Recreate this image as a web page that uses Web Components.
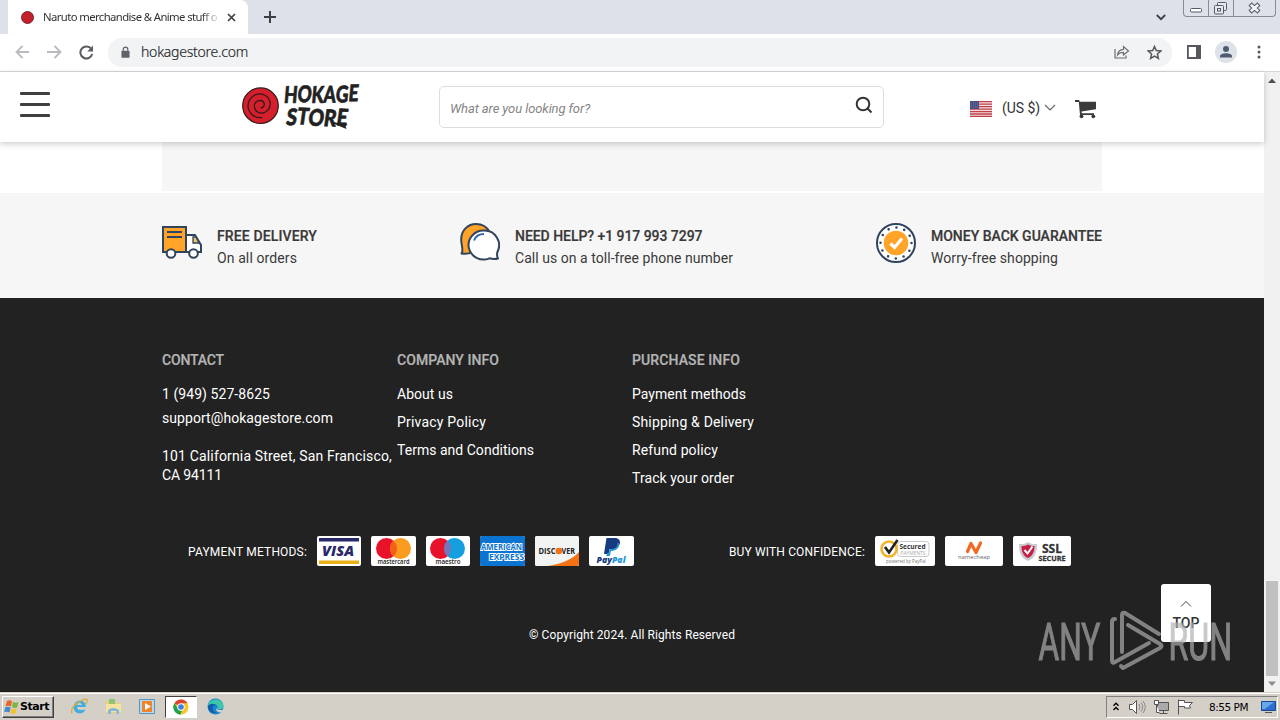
<!DOCTYPE html>
<html lang="en">
<head>
<meta charset="utf-8">
<title>Hokage Store</title>
<style>
html,body{margin:0;height:100%;overflow:hidden}
body{font-family:Roboto,"Liberation Sans",sans-serif;color:#333}
</style>
</head>
<body>
<desktop-screen></desktop-screen>
<script>
const define=(name,html)=>customElements.define(name,class extends HTMLElement{
  constructor(){super();const t=document.createElement('template');t.innerHTML=html;
    this.attachShadow({mode:'open'}).append(t.content.cloneNode(true));}
});

// Label that spreads its letters evenly over the width given in "w".
customElements.define('fit-label',class extends HTMLElement{
  connectedCallback(){
    if(this.shadowRoot)return;
    this.attachShadow({mode:'open'}).innerHTML='<style>:host{display:block;white-space:nowrap}span{display:inline-block}</style><span><slot></slot></span>';
    const s=this.shadowRoot.querySelector('span'),w=+this.getAttribute('w');
    const n=this.textContent.length;
    s.style.letterSpacing=(w-s.getBoundingClientRect().width)/n+'px';
    this.style.width=w+'px';
  }
});

define('browser-tabs',`<style>
:host{display:flex;height:34px;background:#dee1e9;align-items:flex-start}
.tab{margin-left:8px;width:240px;height:34px;background:#fff;border-radius:0 8px 0 0;display:flex;align-items:center;box-sizing:border-box;padding:0 11px 0 13px}
.dot{width:13px;height:13px;border-radius:50%;background:#c3202b;border:.5px solid #7c2630;box-sizing:border-box;margin-right:9px}
.title{width:175px;overflow:hidden;font:11.300px/18px "Noto Sans",sans-serif;color:#333;-webkit-mask:linear-gradient(90deg,#000 158px,transparent 178px)}
svg{display:block}.x{margin-left:9px}.plus{margin:11px 0 0 16px}
.chev{margin:14px 17px 0 auto}
.win{display:flex;border:1px solid #868b95;border-top:0;border-radius:0 0 4px 4px;height:17px;margin-right:4px;box-sizing:border-box}
.win svg+svg{border-left:1px solid #868b95}
</style>
<div class="tab"><i class="dot"></i><div class="title"><fit-label w="174">Naruto merchandise &amp; Anime stuff o</fit-label></div>
<svg class="x" width="9" height="9" stroke="#3c4043" stroke-width="1.7"><path d="M1 1l7 7M8 1l-7 7"/></svg></div>
<svg class="plus" width="12" height="12" stroke="#3c4043" stroke-width="2"><path d="M6 0v12M0 6h12"/></svg>
<svg class="chev" width="10" height="7" fill="none" stroke="#3c4043" stroke-width="1.8"><path d="M.8 1l4.2 4.2L9.200 1"/></svg>
<div class="win">
<svg width="24" height="16" fill="#fff" stroke="#555b66"><rect x="6.500" y="8.500" width="11" height="3.500" rx="1"/></svg>
<svg width="24" height="16" fill="#e6e8ed" stroke="#555b66"><rect x="8.500" y="2.500" width="9" height="8" rx="1"/><rect x="5.500" y="5.500" width="9" height="8.500" rx="1"/><rect x="8.500" y="8.500" width="3" height="2.500"/></svg>
<svg width="41" height="16"><path d="M16 4l9 8M25 4l-9 8" stroke="#555b66" stroke-width="4.600"/><path d="M16.800 4.700l7.400 6.600M24.200 4.700l-7.400 6.600" stroke="#f4f5f7" stroke-width="2.600"/></svg>
</div>`);

define('browser-toolbar',`<style>
:host{display:flex;height:38px;box-sizing:border-box;border-bottom:1px solid #d5d7da;background:#fff;align-items:center;padding:0 15px 1px}
svg{display:block;flex:none}
.nav{display:flex;gap:17px}
.omni{display:flex;align-items:center;background:#f1f3f4;border-radius:14px;height:29px;width:1064px;box-sizing:border-box;margin-left:14px;padding:0 10px 0 13px}
fit-label{font:300 14px "Noto Sans",sans-serif;color:#202124;margin-left:11px;line-height:30px;-webkit-text-stroke:.15px #202124}
.share{margin-left:auto;margin-right:17px}
.right{display:flex;align-items:center;margin-left:15px}
</style>
<div class="nav">
<svg width="15" height="14" fill="none" stroke="#b9bbbe" stroke-width="1.800"><path d="M14 7H1.500M7.500 1L1.500 7l6 6"/></svg>
<svg width="15" height="14" fill="none" stroke="#b9bbbe" stroke-width="1.800"><path d="M0 7h13M7.500 1l6 6-6 6"/></svg>
<svg width="15" height="15" fill="none" stroke="#5a5d61" stroke-width="2"><path d="M12.300 4A6 6 0 1 0 13.200 9"/><path d="M14 .5v6H8.300z" fill="#5a5d61" stroke="none"/></svg>
</div>
<div class="omni">
<svg width="9" height="12" viewBox="0 0 10 13"><rect x=".5" y="5" width="9" height="8" rx="1" fill="#5f6368"/><path d="M2.500 5V3.500a2.500 2.500 0 0 1 5 0V5" fill="none" stroke="#5f6368" stroke-width="1.400"/></svg>
<fit-label w="107">hokagestore.com</fit-label>
<svg class="share" width="16" height="14" fill="none" stroke="#6b6e72" stroke-width="1.200"><path d="M1 4v9h11v-2.500M3.500 10C4 6 6 4.500 9.500 4.300V1.500L14.500 6 9.500 10V7.300C7 7.300 5 8 3.500 10z"/></svg>
<svg width="15" height="15" fill="none" stroke="#55585c" stroke-width="1.500"><path d="M7.500 1.500l1.800 4.100 4.500.4-3.400 3 1 4.400-3.900-2.300-3.900 2.300 1-4.400-3.400-3 4.500-.4z"/></svg>
</div>
<div class="right">
<svg width="14" height="14"><path d="M0 0h14v14H0zM1.800 2v10H9V2z" fill="#55585d" fill-rule="evenodd"/></svg>
<svg style="margin-left:14px" width="22" height="22"><circle cx="11" cy="11" r="11" fill="#dde2e8"/><circle cx="11" cy="8" r="3" fill="#505b73"/><path d="M5 16.500v-1.200c0-4 12-4 12 0v1.200z" fill="#505b73"/></svg>
<svg style="margin-left:20px" width="4" height="14" fill="#55585d"><circle cx="2" cy="2" r="1.500"/><circle cx="2" cy="7" r="1.500"/><circle cx="2" cy="12" r="1.500"/></svg>
</div>`);

define('store-header',`<style>
:host{display:flex;height:70px;flex:none;background:#fff;box-shadow:0 2px 6px rgba(0,0,0,.2);position:relative;z-index:1;padding-left:20px;box-sizing:border-box}
svg{display:block;flex:none}
.burger{width:30px;margin-top:20px}.burger i{display:block;height:3px;border-radius:1px;background:#3f3f3f;margin-bottom:8px}
.logo{margin:10px 0 0 190px;overflow:visible}
.search{width:445px;height:42px;margin:14px 0 0 77px;box-sizing:border-box;border:1px solid #ddd;border-radius:5px;display:flex;justify-content:space-between;padding:0 10px 0 10px}
.search fit-label{font:italic 13px/43px Roboto,sans-serif;color:#858585}
.search svg{margin-top:9px}
.cur{display:flex;margin:29px 0 0 86px;height:16px}
.cur fit-label{font:14px/15px Roboto,sans-serif;margin:0 4px 0 10px}
.cart{margin:28px 0 0 19px}
</style>
<div class="burger"><i></i><i></i><i></i></div>
<svg class="logo" width="122" height="50" viewBox="240 82 122 50">
<circle cx="260.500" cy="105.700" r="17.800" fill="#d3202c" stroke="#35181a" stroke-width="1.200"/>
<path d="M260.500 107.500c2 1 4.500-1.500 3.500-4.500-1.700-4-8.500-3-9.500 2-1 6.500 5.500 10 11 7 6.500-4 6-13.500-1-17-8.500-3.500-16.500 3-16.500 11 .5 8 7.500 12.500 14.500 11.500" fill="none" stroke="#35181a" stroke-width="1.250"/>
<g font-family="Lato,sans-serif" font-weight="900" fill="#222" stroke="#222" stroke-width=".7" stroke-linejoin="round">
<text transform="translate(283.500 103) rotate(-1) skewX(-6)" font-size="23" textLength="74.500" lengthAdjust="spacingAndGlyphs"><tspan>H</tspan><tspan dy="-.5">O</tspan><tspan dy="1">K</tspan><tspan dy="0">A</tspan><tspan dy="0">G</tspan><tspan dy="-1">E</tspan></text>
<text transform="translate(285.500 125) rotate(2) skewX(-6)" font-size="23" textLength="61" lengthAdjust="spacingAndGlyphs"><tspan>S</tspan><tspan dy="-1.200">T</tspan><tspan dy=".8">O</tspan><tspan dy="0">R</tspan><tspan dy="-1">E</tspan></text></g>
<path d="M331 121l8 2.500 8.500 1-2 1.500 1 3-5-2-9-4z" fill="#222"/>
</svg>
<div class="search"><fit-label w="140">What are you looking for?</fit-label>
<svg width="18" height="18" fill="none" stroke="#333" stroke-width="2"><circle cx="8" cy="8" r="6.300"/><path d="M12.500 12.500l4 4"/></svg></div>
<div class="cur">
<svg width="22" height="16"><path fill="#f3dede" d="M0 0h22v16H0z"/><path d="M0 .7h22M0 3.200h22M0 5.700h22M0 8.200h22M0 10.600h22M0 13h22M0 15.400h22" stroke="#c0414c" stroke-width="1.300"/><path fill="#4a5084" d="M0 0h9v8H0z"/><path d="M1 2h7M1 4h7M1 6h7" stroke="#8086aa" stroke-width=".6" stroke-dasharray="1 1"/></svg>
<fit-label w="38">(US $)</fit-label>
<svg style="margin-top:3px" width="12" height="8" fill="none" stroke="#666" stroke-width="1.200"><path d="M1 1l5 5 5-5"/></svg>
</div>
<svg class="cart" width="22" height="19" fill="#3b3b3b"><path d="M0 0h4l.8 1.700H21v7.500L6.500 11.500l.3 1.700H19V15H5L3.800 2H0z"/><circle cx="6.500" cy="16.300" r="1.900"/><circle cx="18.300" cy="16.300" r="1.900"/></svg>`);

define('feature-item',`<style>
:host{display:flex;gap:15px;align-items:flex-start}
.t{padding-top:3px}
::slotted(b),::slotted(span){display:block}
</style><slot name="icon"></slot><div class="t"><slot></slot></div>`);

define('feature-bar',`<style>
:host{display:flex;justify-content:space-between;background:#f6f6f6;height:105px;box-sizing:border-box;padding:30px 162px 0;margin-top:2px;flex:none}
b,span{font-size:14px;line-height:20px;color:#3a3a3a;display:block}b{font-weight:500;-webkit-text-stroke:.2px #333}span{line-height:24px}
svg{width:40px;height:40px;flex:none;stroke:#30455d;stroke-width:2}
</style>
<feature-item><svg slot="icon" viewBox="0 0 40 40"><path d="M1 4h23v25H1z" fill="#ffa428"/><path d="M5 9h15M5 14h15" fill="none"/><path d="M24 12h9l6 10v7H24z" fill="#fff"/><path d="M31 14h3l3 6h-6z" fill="#f2c067" stroke-width="1.300"/><circle cx="9" cy="30.500" r="4.300" fill="#fff"/><circle cx="31.500" cy="30.500" r="4.300" fill="#fff"/></svg><b><fit-label w="100">FREE DELIVERY</fit-label></b><span><fit-label w="80">On all orders</fit-label></span></feature-item>
<feature-item><svg slot="icon" viewBox="0 0 40 40" stroke-linejoin="round"><path d="M1.500 30.500C4 27 1 22 1.200 16 1.500 7 8 1 16 1c6 0 11 3 13.500 8L12 29c-3 2-6 2-10.500 1.500z" fill="#ffa428"/><path d="M24 7.500a15 14.500 0 1 0 5.500 27.800c3 .9 5.500 1 8.500.2-1.200-2-1.200-4-.6-6.500A14.700 14.700 0 0 0 24 7.500z" fill="#fff"/><path d="M14 17.500c1.500-4 5-6.500 10-6.500" fill="none" stroke="#3566a8"/></svg><b><fit-label w="187.500">NEED HELP? +1 917 993 7297</fit-label></b><span><fit-label w="218">Call us on a toll-free phone number</fit-label></span></feature-item>
<feature-item><svg slot="icon" viewBox="0 0 40 40"><circle cx="20" cy="20" r="19" fill="#fff"/><circle cx="20" cy="20" r="15.500" fill="none" stroke-width="2.600" stroke-linecap="round" stroke-dasharray="0 8.116"/><circle cx="20" cy="20" r="12.300" fill="#ffa428" stroke="none"/><path d="M14.500 20.500l4 4 7.500-9" fill="none" stroke="#fff" stroke-width="3.200"/></svg><b><fit-label w="171">MONEY BACK GUARANTEE</fit-label></b><span><fit-label w="127">Worry-free shopping</fit-label></span></feature-item>`);

define('pay-badge',`<style>:host{display:block;height:30px;border-radius:2px;overflow:hidden;background:#fff}::slotted(svg){display:block}</style><slot></slot>`);

define('store-footer',`<style>
:host{display:flex;flex-direction:column;flex:1;background:#222;color:#fff;padding:51px 162px 0;font-size:14px}
.cols{display:grid;grid-template-columns:235px 235px 235px;height:187px}
h4{margin:0;font:500 14px/22px Roboto,sans-serif;color:#b4b4b4;-webkit-text-stroke:.2px #b4b4b4}
.l{line-height:28px;padding-top:9px}
.c{line-height:24px;padding-top:11px}.a{line-height:19px;padding-top:17px}
.row{display:flex;height:30px;line-height:32px;font-size:12px;padding-left:26px}
.g{display:flex;gap:10px;margin-left:10px}
.copy{font-size:12px;line-height:16px;margin:61px 0 0 367px}
text{font-family:"Open Sans",sans-serif}
</style>
<div class="cols">
<div><h4><fit-label w="62">CONTACT</fit-label></h4><div class="c"><fit-label w="108">1 (949) 527-8625</fit-label><fit-label w="171">support@hokagestore.com</fit-label></div><div class="a"><fit-label w="230">101 California Street, San Francisco,</fit-label><fit-label w="60">CA 94111</fit-label></div></div>
<div><h4><fit-label w="102">COMPANY INFO</fit-label></h4><div class="l"><fit-label w="56">About us</fit-label><fit-label w="89">Privacy Policy</fit-label><fit-label w="137">Terms and Conditions</fit-label></div></div>
<div><h4><fit-label w="108">PURCHASE INFO</fit-label></h4><div class="l"><fit-label w="114">Payment methods</fit-label><fit-label w="122">Shipping &amp; Delivery</fit-label><fit-label w="86">Refund policy</fit-label><fit-label w="102">Track your order</fit-label></div></div>
</div>
<div class="row">
<fit-label w="119">PAYMENT METHODS:</fit-label>
<div class="g">
<pay-badge><svg width="44" height="30"><path fill="#29286b" d="M2 2h40v3.500H2z"/><path fill="#e9b01a" d="M2 24.500h40V28H2z"/><text x="5" y="19.500" font-size="14.500" font-weight="800" font-style="italic" fill="#29286b" textLength="32" lengthAdjust="spacingAndGlyphs">VISA</text></svg></pay-badge>
<pay-badge><svg width="45" height="30"><circle cx="15.500" cy="12.500" r="10.500" fill="#e8132b"/><circle cx="29.500" cy="12.500" r="10.500" fill="#fb9b20"/><path d="M22.500 4.700a10.500 10.500 0 0 1 0 15.600 10.500 10.500 0 0 1 0-15.600z" fill="#f46016"/><text x="6.500" y="28.300" font-size="6.500" font-weight="600" fill="#222" textLength="32" lengthAdjust="spacingAndGlyphs">mastercard</text></svg></pay-badge>
<pay-badge><svg width="44" height="30"><circle cx="14.500" cy="12.500" r="10.500" fill="#e8132b"/><circle cx="28.500" cy="12.500" r="10.500" fill="#159fdf"/><path d="M21.500 4.700a10.500 10.500 0 0 1 0 15.600 10.500 10.500 0 0 1 0-15.600z" fill="#7774b9"/><text x="9.500" y="28.300" font-size="6.500" font-weight="600" fill="#222" textLength="25" lengthAdjust="spacingAndGlyphs">maestro</text></svg></pay-badge>
<pay-badge><svg width="45" height="30"><path fill="#0b73d0" d="M0 0h45v30H0z"/><g font-weight="700" font-size="8" fill="#0b73d0" stroke="#fff" stroke-width="1.800" paint-order="stroke"><text x="1" y="13.500" textLength="41" lengthAdjust="spacingAndGlyphs">AMERICAN</text><text x="9" y="23.500" textLength="35" lengthAdjust="spacingAndGlyphs">EXPRESS</text></g></svg></pay-badge>
<pay-badge><svg width="44" height="30"><path fill="#f2f3f3" d="M0 0h44v30H0z"/><path d="M44 16v14H12Q34 27 44 16z" fill="#f47216"/><g font-size="9" font-weight="700" fill="#222"><text x="3.500" y="18.300" textLength="17" lengthAdjust="spacingAndGlyphs">DISC</text><text x="26.500" y="18.300" textLength="13.500" lengthAdjust="spacingAndGlyphs">VER</text></g><circle cx="23.800" cy="15" r="3.300" fill="#f47216"/></svg></pay-badge>
<pay-badge><svg width="45" height="30"><path d="M17.500 2h8c9 0 6 11-2 11h-3l-1 5H15z" fill="#173a80"/><path d="M28.500 5.500c4 5-1 9.500-6.500 9.500l-1.200 5h-3.600l1-3h1.500l1-4H24c3.500 0 5-4 4.500-7.500z" fill="#2296d6"/><text x="7.500" y="26.500" font-size="8.500" font-weight="800" font-style="italic" textLength="29" lengthAdjust="spacingAndGlyphs" fill="#173a80">Pay<tspan fill="#2296d6">Pal</tspan></text></svg></pay-badge>
</div>
<fit-label style="margin-left:95px" w="136">BUY WITH CONFIDENCE:</fit-label>
<div class="g">
<pay-badge><svg width="60" height="30"><rect x="22.500" y="5.500" width="31.500" height="15" rx="3" fill="none" stroke="#c9c9c9"/><circle cx="14" cy="13" r="7.500" fill="#fff" stroke="#f3b32b" stroke-width="2.600"/><path d="M10 11l4 5.500L22.500 4" fill="none" stroke="#222" stroke-width="2.600"/><text x="24.500" y="12.800" font-size="7" font-weight="700" fill="#333" textLength="26" lengthAdjust="spacingAndGlyphs">Secured</text><text x="25.500" y="18.500" font-size="4.500" fill="#aaa" textLength="25" lengthAdjust="spacingAndGlyphs">PAYMENTS</text><text x="11" y="26.500" font-size="5" fill="#777" textLength="40" lengthAdjust="spacingAndGlyphs">powered by PayPal</text></svg></pay-badge>
<pay-badge><svg width="58" height="30"><path d="M22.500 15.500L26 7.500l5 9 4.500-9.500" fill="none" stroke="#f26924" stroke-width="3.200" stroke-linejoin="round" stroke-linecap="round"/><text x="13" y="23" font-size="6" fill="#666" textLength="32" lengthAdjust="spacingAndGlyphs">namecheap</text></svg></pay-badge>
<pay-badge><svg width="58" height="30"><path d="M15 6c3 2 5 2 9 2 0 9-2 14-9 17C8 22 6 17 6 8c4 0 6 0 9-2z" fill="#c8ccd0"/><path d="M15 8.500c2 1.500 4 1.500 6.500 1.500 0 6-2 10-6.500 12-4.500-2-6.500-6-6.500-12 2.500 0 4.500 0 6.500-1.500z" fill="#c81e45"/><path d="M11.500 14l3 3.500 5-7" fill="none" stroke="#fff" stroke-width="2"/><g font-weight="700" fill="#343434" stroke="#343434" stroke-width=".3"><text x="29" y="16.500" font-size="12" textLength="20" lengthAdjust="spacingAndGlyphs">SSL</text><text x="25.500" y="24.500" font-size="7.500" textLength="27" lengthAdjust="spacingAndGlyphs">SECURE</text></g></svg></pay-badge>
</div></div>
<div class="copy"><fit-label w="206">© Copyright 2024. All Rights Reserved</fit-label></div>`);

define('scroll-rail',`<style>
:host{display:flex;flex-direction:column;width:16px;background:#f1f1f1;align-items:center}
svg{display:block}.thumb{width:12px;height:95px;margin-top:auto;background:#c1c1c1}
</style><svg width="16" height="16"><path d="M4 11h8L8 6.500z" fill="#505050"/></svg><div class="thumb"></div><svg width="16" height="16"><path d="M4 5.500h8L8 10z" fill="#8b8b8b"/></svg>`);

define('top-button',`<style>
:host{position:absolute;left:1161px;top:584px;width:50px;height:58px;background:#fff;border-radius:3px;display:flex;flex-direction:column;align-items:center}
svg{display:block;margin:16px 0 6px}
fit-label{font:500 14px/18px Roboto,sans-serif;color:#333}
</style><svg width="12" height="8" fill="none" stroke="#444" stroke-width="1"><path d="M1 6.500l5-5 5 5"/></svg><fit-label w="27">TOP</fit-label>`);

define('run-mark',`<style>
:host{position:absolute;left:1036px;top:606px;width:200px;height:70px;opacity:.68}svg{display:block}
</style><svg width="200" height="70" viewBox="1036 606 200 70">
<g font-family="Roboto,sans-serif" font-weight="400" font-size="52.500" fill="#b0b0b0" stroke="#b0b0b0" stroke-width="1.200"><text x="0" y="0" transform="translate(1038.500 659.500) scale(.6 1)" textLength="103" lengthAdjust="spacingAndGlyphs">ANY</text><text x="0" y="0" transform="translate(1168.500 659.500) scale(.6 1)" textLength="106" lengthAdjust="spacingAndGlyphs">RUN</text></g>
<g fill="none" stroke="#b0b0b0" stroke-width="4" stroke-linecap="round" stroke-linejoin="round"><path d="M1122 652v-37q0-3 3-2l34 21"/><path d="M1115 619q-3 0-3 3v38q0 4 3 2l34-19"/><path d="M1128 625l32 19q3 2 0 4l-37 20-2-2"/></g></svg>`);

define('task-bar',`<style>
:host{display:flex;height:28px;box-sizing:border-box;background:#d4d0c8;box-shadow:inset 0 1px #d4d0c8,inset 0 2px #fff;align-items:center;padding:3px 2px 2px;flex:none}
svg{display:block;flex:none}
.start{width:52px;height:22px;box-sizing:border-box;border:1px solid;border-color:#fff #404040 #404040 #fff;box-shadow:inset -1px -1px #808080;display:flex;align-items:center;padding-left:1px;font:bold 11px "DejaVu Sans",sans-serif;color:#000}
.apps{display:flex;align-items:center;margin-left:8px}
.app{width:34px;height:22px;display:flex;align-items:center;justify-content:center;box-sizing:border-box}
.on{width:32px;margin:0 1px;background:#fff;border:1px solid;border-color:#404040 #fff #fff #404040}
.tray{margin-left:auto;width:172px;height:22px;box-sizing:border-box;border:1px solid;border-color:#808080 #fff #fff #808080;display:flex;align-items:center;padding:0 1px 0 6px}
.tray fit-label{font:10.500px "DejaVu Sans",sans-serif;color:#000}
</style>
<div class="start"><svg width="15" height="16"><path d="M3 2q3-1.500 5 .2L7 7.500Q4.500 6 1.500 7.200z" fill="#e8662a"/><path d="M9 2.800q2.500 1.500 5.500.3L13 8.500q-2.500 1-5-.6z" fill="#7ab540"/><path d="M1.300 8.300q3-1.300 5.300.3L5.500 13.500q-2.500-1.500-5.300-.4z" fill="#4289cf"/><path d="M7.700 9.200q2.500 1.300 5 .4l-1.400 5q-2.500 1-5-.6z" fill="#f5c02c"/></svg><fit-label style="margin-left:1px" w="29">Start</fit-label></div>
<div class="apps">
<div class="app"><svg width="17" height="17"><path d="M14.500 11.500q-2 4-6 4-6-1-6-6.500 1-6.500 6.500-6.500 6 .5 5.800 6.500H6q.5 3 3 3h1.500zM6 7h5Q10.500 5 8.500 5T6 7z" fill="#45acdf" fill-rule="evenodd"/><path d="M1 15.500Q-1 10 6.500 5T16 1.500Q17 3 14.500 6" fill="none" stroke="#d7ad3a" stroke-width="1.300"/></svg></div>
<div class="app"><svg width="17" height="17"><path d="M1 3h6l1 2h8v10H1z" fill="#ecd173"/><path d="M4 1h6v5H4z" fill="#8fc477"/><path d="M1 6h15v8H1z" fill="#f5e3a0"/><path d="M3 16v-4q5-4 11 0v4h-2.500v-3H6v3z" fill="#83b7dc"/></svg></div>
<div class="app"><svg width="16" height="17"><path d="M.5 1.500h15v14H.5z" fill="#b6daf0" stroke="#5a94bd"/><path d="M3 3h10v11H3z" fill="#f1842a"/><path d="M6 5l6 3.500L6 12z" fill="#fff"/></svg></div>
<div class="app on"><svg width="16" height="16" viewBox="0 0 16 16"><circle cx="8" cy="8" r="7.500" fill="#f8c724"/><path d="M8 8L1.500 4.200a7.500 7.500 0 0 1 13 0H8z" fill="#dc4336"/><path d="M1.500 4.200L8 15.500a7.500 7.500 0 0 1-6.500-11.300z" fill="#24a151"/><path d="M1.500 4.200L4.800 10 9 12l-1.800 3.500A7.500 7.500 0 0 1 1.500 4.200z" fill="#24a151"/><circle cx="8" cy="8" r="3.700" fill="#fff"/><circle cx="8" cy="8" r="2.800" fill="#3b7ee8"/></svg></div>
<div class="app"><svg width="17" height="17"><circle cx="8.500" cy="8.500" r="8" fill="#1886d2"/><path d="M.8 7C3 1 14-1.500 16.500 7.500c0 4-4 4.500-6.500 3 2-3-1-5-4-4.500-3 0-5 2-5.200 1z" fill="#3cc8a8"/><path d="M6 8q-2 5 4 7-9 1-9-7 3-4 8-1z" fill="#135ca9"/><path d="M9 10.500q3.500 2.500 7.500 1-1 2-2.500 3-5 0-5-4z" fill="#d4d0c8"/></svg></div>
</div>
<div class="tray">
<svg width="6" height="9" fill="none" stroke="#000" stroke-width="1.400"><path d="M.5 3.800L3 1.300l2.500 2.500M.5 8L3 5.500 5.500 8"/></svg>
<svg style="margin-left:10px" width="17" height="16" fill="#fff" stroke="#555"><path d="M.5 5.500h3l4-4v13l-4-4h-3z"/><path d="M10 5q2 3 0 6M12 3.500q3.500 4.500 0 9M14 2q4.500 6 0 12" fill="none" stroke="#888"/></svg>
<svg style="margin-left:7px" width="17" height="16" stroke="#555"><path d="M4.500 3.500h11v8h-11z" fill="#aaa"/><path d="M6.500 14.500h8M10.500 12v2" fill="none"/><path d="M1.500 1.500h4v4h-4zM3.500 5.500v8h3" fill="#fff"/></svg>
<svg style="margin-left:7px" width="16" height="16" fill="#fff" stroke="#555"><path d="M1.500.5v15M1.500 1.500h6v2h8l-3 3 1 2.500h-6v-1.500h-6z"/></svg>
<fit-label style="margin-left:16px" w="39">8:55 PM</fit-label>
<svg style="margin-left:auto" width="15" height="14"><path d="M.5 1.500h14v9H.5z" fill="#2b70cf" stroke="#184a94"/><path d="M1 2h12L4 9H1z" fill="#69a7ed"/><path d="M4 12.500h7" stroke="#555"/></svg>
</div>`);

define('desktop-screen',`<style>
:host{display:flex;flex-direction:column;width:1280px;height:720px;position:relative;overflow:hidden}
.view{display:flex;height:620px;flex:none}
.page{width:1264px;display:flex;flex-direction:column;background:#fff}
.panel{height:49px;flex:none;margin:0 162px;background:#f6f6f6}
</style>
<browser-tabs></browser-tabs><browser-toolbar></browser-toolbar>
<div class="view"><div class="page"><store-header></store-header><div class="panel"></div><feature-bar></feature-bar><store-footer></store-footer></div><scroll-rail></scroll-rail></div>
<task-bar></task-bar><top-button></top-button><run-mark></run-mark>`);
</script>
</body>
</html>
